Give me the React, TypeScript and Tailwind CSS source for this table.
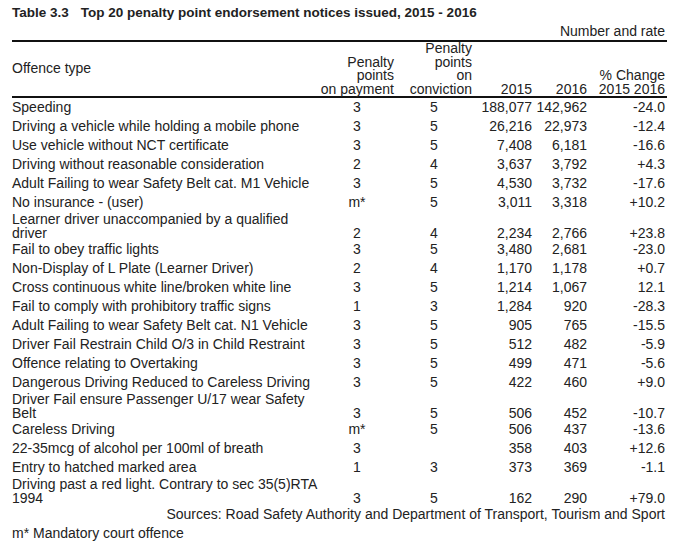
import React from "react";

type Row = {
  offence: string[];
  pay: string;
  conv: string;
  y2015: string;
  y2016: string;
  change: string;
};

const rows: Row[] = [
  { offence: ["Speeding"], pay: "3", conv: "5", y2015: "188,077", y2016: "142,962", change: "-24.0" },
  { offence: ["Driving a vehicle while holding a mobile phone"], pay: "3", conv: "5", y2015: "26,216", y2016: "22,973", change: "-12.4" },
  { offence: ["Use vehicle without NCT certificate"], pay: "3", conv: "5", y2015: "7,408", y2016: "6,181", change: "-16.6" },
  { offence: ["Driving without reasonable consideration"], pay: "2", conv: "4", y2015: "3,637", y2016: "3,792", change: "+4.3" },
  { offence: ["Adult Failing to wear Safety Belt cat. M1 Vehicle"], pay: "3", conv: "5", y2015: "4,530", y2016: "3,732", change: "-17.6" },
  { offence: ["No insurance - (user)"], pay: "m*", conv: "5", y2015: "3,011", y2016: "3,318", change: "+10.2" },
  { offence: ["Learner driver unaccompanied by a qualified", "driver"], pay: "2", conv: "4", y2015: "2,234", y2016: "2,766", change: "+23.8" },
  { offence: ["Fail to obey traffic lights"], pay: "3", conv: "5", y2015: "3,480", y2016: "2,681", change: "-23.0" },
  { offence: ["Non-Display of L Plate (Learner Driver)"], pay: "2", conv: "4", y2015: "1,170", y2016: "1,178", change: "+0.7" },
  { offence: ["Cross continuous white line/broken white line"], pay: "3", conv: "5", y2015: "1,214", y2016: "1,067", change: "12.1" },
  { offence: ["Fail to comply with prohibitory traffic signs"], pay: "1", conv: "3", y2015: "1,284", y2016: "920", change: "-28.3" },
  { offence: ["Adult Failing to wear Safety Belt cat. N1 Vehicle"], pay: "3", conv: "5", y2015: "905", y2016: "765", change: "-15.5" },
  { offence: ["Driver Fail Restrain Child O/3 in Child Restraint"], pay: "3", conv: "5", y2015: "512", y2016: "482", change: "-5.9" },
  { offence: ["Offence relating to Overtaking"], pay: "3", conv: "5", y2015: "499", y2016: "471", change: "-5.6" },
  { offence: ["Dangerous Driving Reduced to Careless Driving"], pay: "3", conv: "5", y2015: "422", y2016: "460", change: "+9.0" },
  { offence: ["Driver Fail ensure Passenger U/17 wear Safety", "Belt"], pay: "3", conv: "5", y2015: "506", y2016: "452", change: "-10.7" },
  { offence: ["Careless Driving"], pay: "m*", conv: "5", y2015: "506", y2016: "437", change: "-13.6" },
  { offence: ["22-35mcg of alcohol per 100ml of breath"], pay: "3", conv: "", y2015: "358", y2016: "403", change: "+12.6" },
  { offence: ["Entry to hatched marked area"], pay: "1", conv: "3", y2015: "373", y2016: "369", change: "-1.1" },
  { offence: ["Driving past a red light. Contrary to sec 35(5)RTA", "1994"], pay: "3", conv: "5", y2015: "162", y2016: "290", change: "+79.0" },
];

const cols = "grid grid-cols-[298px_94px_76px_52px_55px_80px]";

const App = () => {
  return (
    <div
      className="min-h-screen w-[687px] bg-white text-[#222] px-[12px] pt-[5px]"
      style={{ fontFamily: '"Liberation Sans", Arial, sans-serif' }}
    >
      {/* Title */}
      <h1 className="text-[13.5px] leading-[15px] font-bold whitespace-nowrap">
        Table 3.3<span className="ml-[12px]">Top 20 penalty point endorsement notices issued, 2015 - 2016</span>
      </h1>

      <div className="w-[655px] text-[14px] leading-[13.4px]">
        <p className="mt-[5px] text-right pr-[2px]">Number and rate</p>

        {/* Header */}
        <div className={`${cols} mt-[1.6px] h-[54px] border-t-2 border-b-2 border-[#111] box-content leading-[13.6px] whitespace-nowrap`}>
          <div className="flex items-center">Offence type</div>
          <div className="flex flex-col items-end justify-end pr-[10px]">
            <span>Penalty</span>
            <span>points</span>
            <span>on payment</span>
          </div>
          <div className="flex flex-col items-end justify-end pr-[8px]">
            <span>Penalty</span>
            <span>points</span>
            <span>on</span>
            <span>conviction</span>
          </div>
          <div className="flex items-end justify-end">2015</div>
          <div className="flex items-end justify-end">2016</div>
          <div className="flex flex-col items-end justify-end pr-[2px]">
            <span>% Change</span>
            <span>2015 2016</span>
          </div>
        </div>

        {/* Body */}
        {rows.map((r) => (
          <div
            key={r.offence.join(" ")}
            className={`${cols} ${r.offence.length > 1 ? "h-[28px] leading-[14px]" : "h-[19px]"} whitespace-nowrap`}
          >
            <div className="flex flex-col justify-end pb-[3px]">
              {r.offence.map((line) => (
                <span key={line}>{line}</span>
              ))}
            </div>
            <div className="flex items-end justify-center pb-[3px]">{r.pay}</div>
            <div className="flex items-end justify-center pr-[16px] pb-[3px]">{r.conv}</div>
            <div className="flex items-end justify-end pb-[3px]">{r.y2015}</div>
            <div className="flex items-end justify-end pb-[3px]">{r.y2016}</div>
            <div className="flex items-end justify-end pr-[2px] pb-[3px]">{r.change}</div>
          </div>
        ))}

        {/* Notes */}
        <div className="h-[19px] flex items-end justify-end pr-[2px] pb-[3px] whitespace-nowrap">
          Sources: Road Safety Authority and Department of Transport, Tourism and Sport
        </div>
        <div className="h-[19px] flex items-end pb-[3px] whitespace-nowrap">m* Mandatory court offence</div>
      </div>
    </div>
  );
};

export default App;
